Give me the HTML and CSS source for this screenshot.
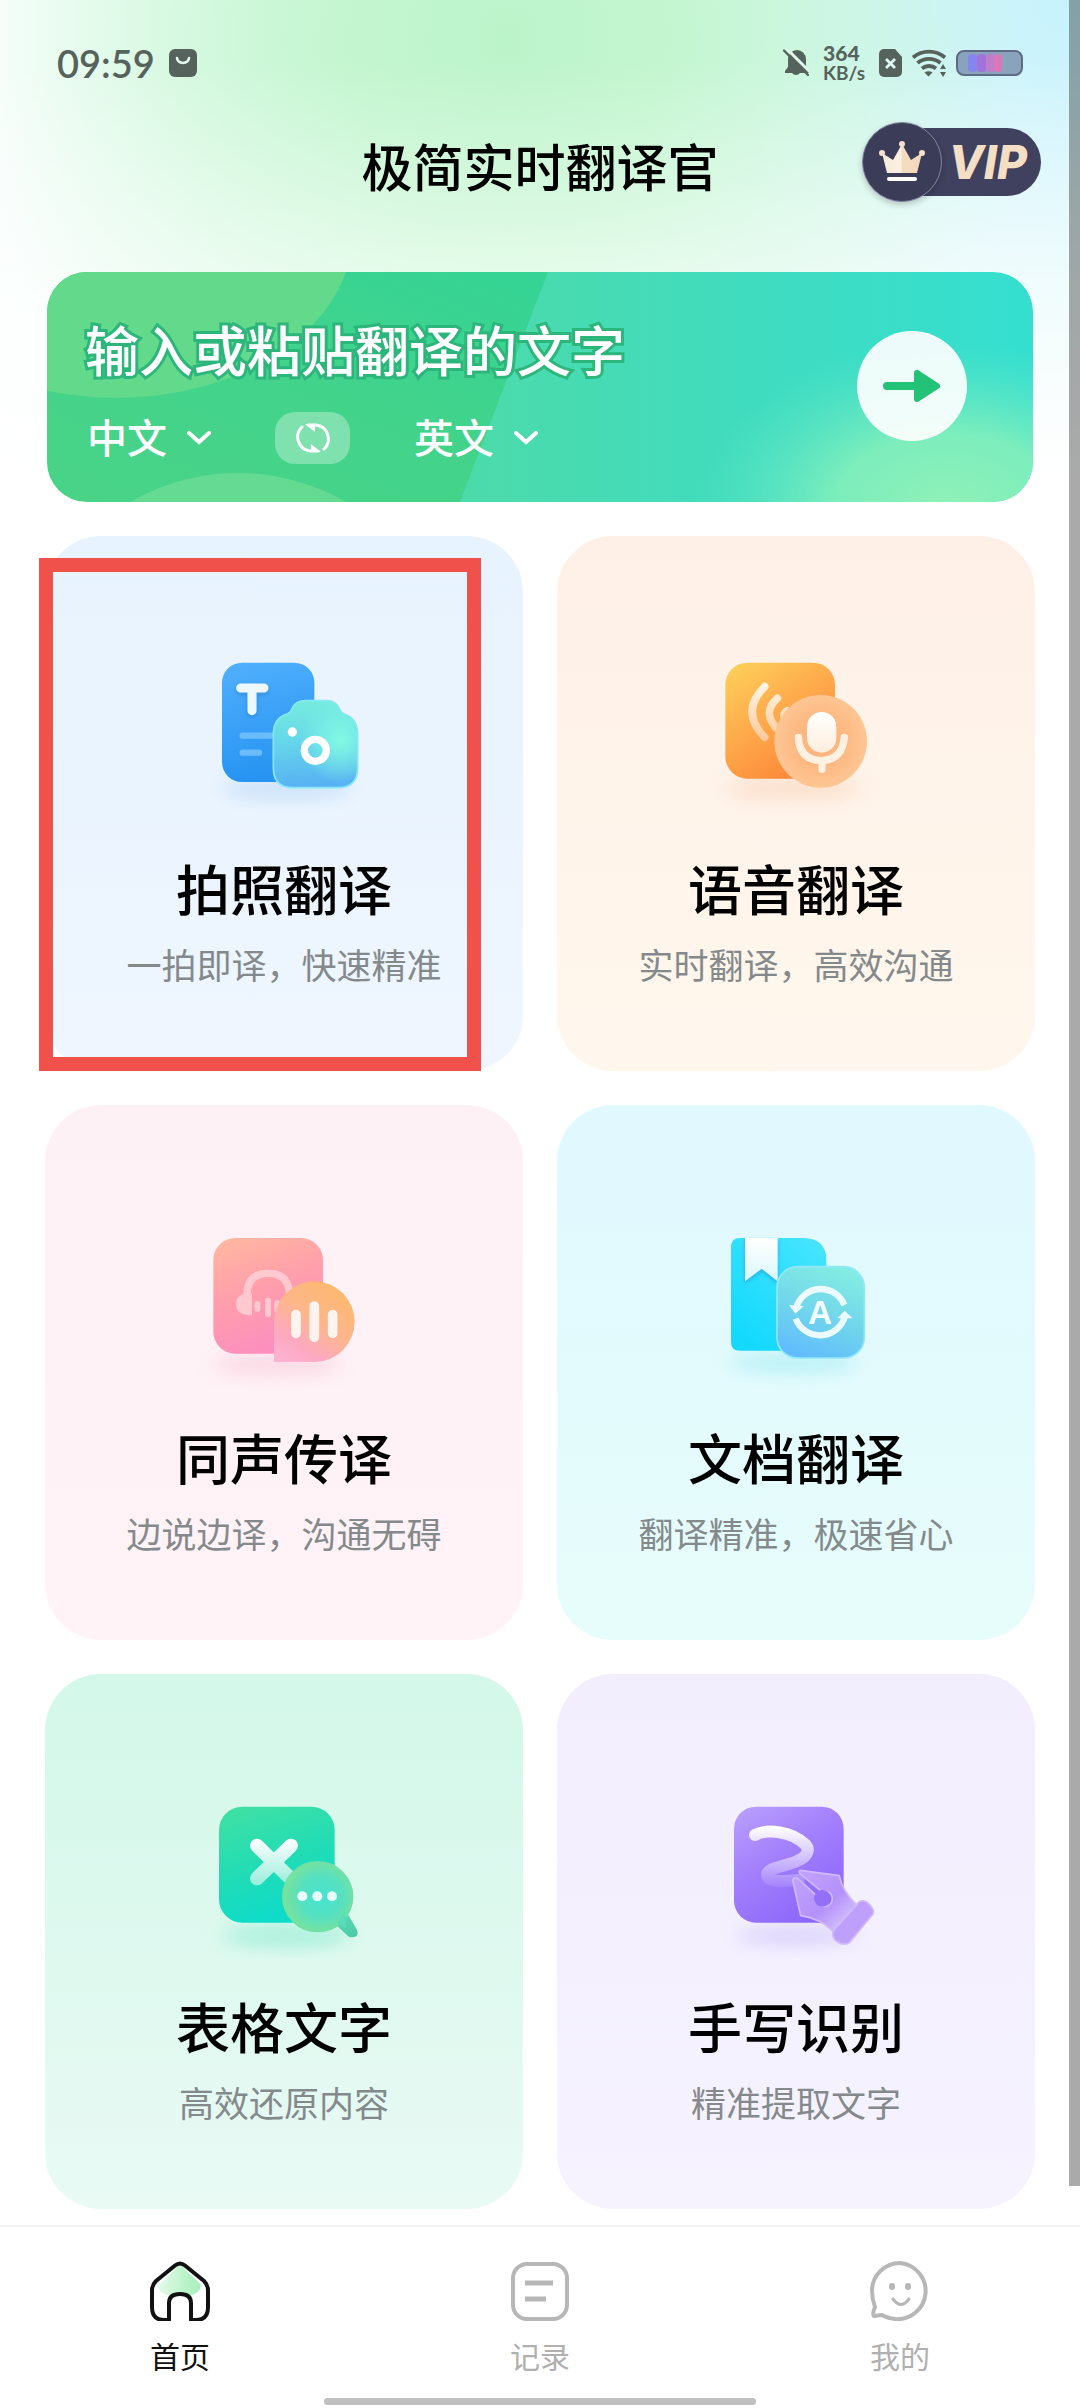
FILE: index.html
```
<!DOCTYPE html>
<html lang="zh-CN">
<head>
  <meta charset="UTF-8">
  <meta name="viewport" content="width=device-width, initial-scale=1">
  <title>极简实时翻译官</title>
  <link rel="stylesheet" href="styles.css">
</head>
<body>
  <header>
    <div class="status-bar">
      <span class="clock">09:59</span>
      <svg class="app-badge" width="28" height="28" viewBox="0 0 28 28">
        <rect width="28" height="28" rx="6" fill="#56635c"/>
        <path d="M8 9a6 5 0 0 0 12 0" fill="none" stroke="#e6fbef" stroke-width="2.6" stroke-linecap="round"/>
      </svg>
      <svg class="bell" width="26" height="29" viewBox="0 0 26 29">
        <path d="M2 24v-2l3-4v-8a9 9 0 0 1 18 0v8l3 4v2h-9a5 5 0 0 1-8 0z" fill="#56635c"/>
        <path d="M3-1l25 25" stroke="#def9ec" stroke-width="3"/>
        <path d="M1 1.500l24 24.500" stroke="#56635c" stroke-width="2.400" stroke-linecap="round"/>
      </svg>
      <span class="net-speed"><b>364</b><small>KB/s</small></span>
      <svg width="23" height="28" viewBox="0 0 23 28">
        <path d="M5 0h11l7 8v15a5 5 0 0 1-5 5H5a5 5 0 0 1-5-5V5a5 5 0 0 1 5-5z" fill="#56635c"/>
        <path d="M7 10l9 9M16 10l-9 9" stroke="#def8f4" stroke-width="2.800"/>
      </svg>
      <svg class="wifi" width="34" height="28" viewBox="0 0 34 28">
        <g fill="none" stroke="#56635c" stroke-width="3.800">
          <path d="M1 8.500a25 25 0 0 1 32 0"/>
          <path d="M5.500 14a18 18 0 0 1 23 0"/>
          <path d="M10 19.500a11 11 0 0 1 14 0"/>
        </g>
        <path d="M12.500 23.500q4-2.500 8 0l-4 4z" fill="#56635c"/>
        <path d="M28 20l3-5 3 5zM28 23l3 5 3-5z" fill="#56635c"/>
      </svg>
      <svg class="battery" width="67" height="26" viewBox="0 0 67 26">
        <rect x="1" y="1" width="65" height="24" rx="7" fill="#8aa3bd" stroke="#5f6a84" stroke-width="2"/>
        <rect x="12" y="4" width="9" height="18" rx="4" fill="#8585ee"/>
        <rect x="21" y="4" width="9" height="18" rx="4" fill="#a272dc"/>
        <rect x="30" y="4" width="9" height="18" rx="4" fill="#c17ccb"/>
        <rect x="38" y="4" width="8" height="18" rx="4" fill="#dc78b8"/>
      </svg>
    </div>

    <div class="title-bar">
      <h1>极简实时翻译官</h1>
      <a class="vip" href="#vip">
        <span class="vip-crown">
          <svg width="48" height="42" viewBox="0 0 48 42">
            <defs>
              <linearGradient id="gold">
                <stop offset="0" stop-color="#f8ead9"/>
                <stop offset=".48" stop-color="#faf0e2"/>
                <stop offset=".5" stop-color="#f5dcc0"/>
                <stop offset="1" stop-color="#f3d9bc"/>
              </linearGradient>
            </defs>
            <path d="M9 32L4 12l11 7 9-16 9 16 11-7-5 20z" fill="url(#gold)"/>
            <g fill="#f6e2ca">
              <circle cx="4" cy="12" r="3"/>
              <circle cx="24" cy="3" r="3"/>
              <circle cx="44" cy="12" r="3"/>
            </g>
            <rect x="9" y="36" width="30" height="4" rx="2" fill="#fff"/>
          </svg>
        </span>
        <span class="vip-label">VIP</span>
      </a>
    </div>
  </header>

  <main>
    <section class="banner">
      <svg class="banner-art" viewBox="0 0 986 230" preserveAspectRatio="none" aria-hidden="true">
        <defs>
          <linearGradient id="banner-left" x1="0" y1="1" x2="1" y2="0">
            <stop offset="0" stop-color="#49d387"/>
            <stop offset=".5" stop-color="#42d38b"/>
            <stop offset="1" stop-color="#32d497"/>
          </linearGradient>
          <linearGradient id="banner-right">
            <stop offset="0" stop-color="#4cdaa9"/>
            <stop offset=".55" stop-color="#3fdcc1"/>
            <stop offset="1" stop-color="#34dfd0"/>
          </linearGradient>
          <radialGradient id="banner-glow">
            <stop offset="0" stop-color="#8ff1b7"/>
            <stop offset=".45" stop-color="#84efbb" stop-opacity=".9"/>
            <stop offset="1" stop-color="#5ee6c4" stop-opacity="0"/>
          </radialGradient>
        </defs>
        <rect width="560" height="230" fill="url(#banner-left)"/>
        <ellipse cx="70" cy="-40" rx="236" ry="166" fill="#62d98b"/>
        <circle cx="191" cy="416" r="215" fill="#65da93"/>
        <path d="M501 0h485v230H413z" fill="url(#banner-right)"/>
        <ellipse cx="900" cy="235" rx="250" ry="165" fill="url(#banner-glow)"/>
      </svg>
      <div class="banner-body">
        <a class="banner-title" href="#text">输入或粘贴翻译的文字</a>
        <div class="lang-row">
          <label class="lang">
            <select aria-label="源语言">
              <option selected>中文</option>
              <option>英文</option>
            </select>
            <svg width="24" height="14" viewBox="0 0 24 14"><path d="M2 2l10 9L22 2"/></svg>
          </label>
          <button class="swap" type="button" aria-label="交换语言">
            <svg width="38" height="32" viewBox="0 0 38 32">
              <g fill="none" stroke="#fff" stroke-width="3" stroke-linecap="round">
                <path d="M8 5a14 14 0 0 0 8 24h8"/>
                <path d="M30 27a14 14 0 0 0-8-24h-8"/>
              </g>
              <path d="M11 2h10v8zM27 30H17v-8z" fill="#fff"/>
            </svg>
          </button>
          <label class="lang">
            <select aria-label="目标语言">
              <option>中文</option>
              <option selected>英文</option>
            </select>
            <svg width="24" height="14" viewBox="0 0 24 14"><path d="M2 2l10 9L22 2"/></svg>
          </label>
        </div>
      </div>
      <button class="go" type="button" aria-label="开始翻译">
        <svg width="58" height="34" viewBox="0 0 58 34">
          <path d="M4 17h30" stroke="#22c277" stroke-width="8" stroke-linecap="round"/>
          <path d="M34 4v26l20-13z" fill="#22c277" stroke="#22c277" stroke-width="6" stroke-linejoin="round"/>
        </svg>
      </button>
    </section>

    <section class="cards">
      <a class="card photo" href="#photo">
        <svg class="card-icon" viewBox="-18 0 660 570">
          <defs>
            <linearGradient id="p1" x2=".2" y2="1"><stop stop-color="#51b0fd"/><stop offset="1" stop-color="#2794f2"/></linearGradient>
            <linearGradient id="p2" x2=".1" y2="1"><stop stop-color="#77eedc"/><stop offset=".5" stop-color="#65d5eb"/><stop offset="1" stop-color="#58b2f3"/></linearGradient>
            <radialGradient id="p3" cx=".8" cy=".45" r=".5"><stop stop-color="#82fae2"/><stop offset="1" stop-color="#82fae2" stop-opacity="0"/></radialGradient>
            <filter id="soft" x="-30%" y="-150%" width="160%" height="400%"><feGaussianBlur stdDeviation="26"/></filter>
            <filter id="drop" x="-30%" y="-30%" width="160%" height="170%"><feDropShadow dx="0" dy="6" stdDeviation="6" flood-color="#1667b5" flood-opacity=".4"/></filter>
          </defs>
          <ellipse cx="320" cy="476" rx="200" ry="38" fill="#b4d4f5" opacity=".5" filter="url(#soft)"/>
          <rect x="126" y="98" width="277" height="358" rx="60" fill="url(#p1)"/>
          <path d="M182 174h70M216 174v68" fill="none" stroke="#ecf7fe" stroke-width="27" stroke-linecap="round" filter="url(#drop)"/>
          <path d="M188 317h110M188 368h49" stroke="#6cbbfb" stroke-width="19" stroke-linecap="round"/>
          <path d="M378 212h62q30 0 40 28 3 10 15 13 38 14 38 60v100q0 60-60 60H340q-60 0-60-60V313q0-46 38-60 14-4 17-15 10-26 43-26z" fill="url(#p2)"/>
          <path d="M378 212h62q30 0 40 28 3 10 15 13 38 14 38 60v100q0 60-60 60H340q-60 0-60-60V313q0-46 38-60 14-4 17-15 10-26 43-26z" fill="url(#p3)" stroke="#86e8f4" stroke-width="5"/>
          <circle cx="337" cy="306" r="14" fill="#fff"/>
          <circle cx="406" cy="361" r="33" fill="none" stroke="#fff" stroke-width="22"/>
        </svg>
        <h2>拍照翻译</h2>
        <p>一拍即译，快速精准</p>
      </a>

      <a class="card voice" href="#voice">
        <svg class="card-icon" viewBox="-12 0 660 570">
          <defs>
            <linearGradient id="v1" x2=".65" y2="1"><stop stop-color="#fed25a"/><stop offset=".5" stop-color="#feab4c"/><stop offset="1" stop-color="#fd8638"/></linearGradient>
            <radialGradient id="v2" cx=".5" cy=".5" r=".52"><stop stop-color="#fdb27a"/><stop offset=".5" stop-color="#fdb882"/><stop offset="1" stop-color="#fdc795"/></radialGradient>
            <linearGradient id="v3" x2="0" y2="1"><stop stop-color="#fff"/><stop offset="1" stop-color="#ffeedd"/></linearGradient>
            <linearGradient id="v4" gradientUnits="userSpaceOnUse" x1="0" y1="160" x2="0" y2="335"><stop stop-color="#fff6e4"/><stop offset="1" stop-color="#ffc899"/></linearGradient>
          </defs>
          <ellipse cx="310" cy="476" rx="205" ry="36" fill="#f8cfb2" opacity=".5" filter="url(#soft)"/>
          <rect x="106" y="98" width="329" height="348" rx="66" fill="url(#v1)"/>
          <g fill="none" stroke="url(#v4)" stroke-width="23" stroke-linecap="round">
            <path d="M224 170q-75 75 0 152"/>
            <path d="M262 205q-48 42 0 92"/>
            <path d="M292 242q-18 12-5 24"/>
          </g>
          <circle cx="392" cy="334" r="139" fill="url(#v2)"/>
          <rect x="351" y="246" width="88" height="122" rx="44" fill="url(#v3)"/>
          <path d="M325 322q4 68 68 70 64-2 70-70M396 394v24" fill="none" stroke="#fff1e2" stroke-width="22" stroke-linecap="round"/>
        </svg>
        <h2>语音翻译</h2>
        <p>实时翻译，高效沟通</p>
      </a>

      <a class="card interpret" href="#interpret">
        <svg class="card-icon" viewBox="-18 -33 660 570">
          <defs>
            <linearGradient id="i1" x2=".35" y2="1"><stop stop-color="#ffb9a0"/><stop offset=".5" stop-color="#ff9fab"/><stop offset="1" stop-color="#fc8fbe"/></linearGradient>
            <linearGradient id="i2" x1=".8" y1="0" x2=".15" y2="1"><stop stop-color="#fdb96c"/><stop offset=".45" stop-color="#fdb68a"/><stop offset=".8" stop-color="#fda9c4"/><stop offset="1" stop-color="#fdb2d0"/></linearGradient>
          </defs>
          <ellipse cx="290" cy="464" rx="195" ry="34" fill="#f8c2d4" opacity=".5" filter="url(#soft)"/>
          <rect x="100" y="84" width="329" height="347" rx="66" fill="url(#i1)"/>
          <g stroke="#ffc9cf" fill="none" stroke-linecap="round">
            <path d="M201 252q2-62 64-62 60 0 64 62" stroke-width="22"/>
            <path d="M232 282v14M264 272v40M292 280v20" stroke-width="18"/>
          </g>
          <path d="M216 250v66q-48 0-48-34t48-32z" fill="#ffc9cf"/>
          <path d="M282 456V335a121 121 0 1 1 121 121z" fill="url(#i2)"/>
          <path d="M348 314v56M403 288v94M458 314v56" stroke="#fff3ef" stroke-width="29" stroke-linecap="round"/>
        </svg>
        <h2>同声传译</h2>
        <p>边说边译，沟通无碍</p>
      </a>

      <a class="card document" href="#document">
        <svg class="card-icon" viewBox="-12 -33 660 570">
          <defs>
            <linearGradient id="d1" x1="1" y1="0" x2=".3" y2="1"><stop stop-color="#49e5fd"/><stop offset="1" stop-color="#14d9fd"/></linearGradient>
            <linearGradient id="d2" x1=".7" y1="0" x2=".35" y2="1"><stop stop-color="#83ede2"/><stop offset=".55" stop-color="#70d5ec"/><stop offset="1" stop-color="#62bcfc"/></linearGradient>
            <linearGradient id="d3" x2="0" y2="1"><stop stop-color="#fff"/><stop offset="1" stop-color="#d9f7fd"/></linearGradient>
          </defs>
          <ellipse cx="310" cy="458" rx="195" ry="34" fill="#a3ecf2" opacity=".6" filter="url(#soft)"/>
          <path d="M150 84h195q64 4 64 66v272H150q-27 0-27-27V111q0-27 27-27z" fill="url(#d1)"/>
          <path d="M165 84h98v130l-48-38-50 38z" fill="url(#d3)" filter="url(#drop)"/>
          <rect x="261" y="170" width="262" height="274" rx="62" fill="url(#d2)" stroke="#8fe9fb" stroke-width="5"/>
          <g fill="none" stroke="#ecfbff" stroke-width="19">
            <path d="M463 285a76 76 0 0 0-144 8"/>
            <path d="M317 326a78 78 0 0 0 147-4"/>
          </g>
          <path d="M297 285l44 4-25 22zM442 325l22-23 24 23z" fill="#ecfbff"/>
          <text class="icon-a" x="390" y="341">A</text>
        </svg>
        <h2>文档翻译</h2>
        <p>翻译精准，极速省心</p>
      </a>

      <a class="card sheet" href="#sheet">
        <svg class="card-icon" viewBox="-18 -36 660 570">
          <defs>
            <linearGradient id="s1" x2=".35" y2="1"><stop stop-color="#42e1a2"/><stop offset=".6" stop-color="#20dcb6"/><stop offset="1" stop-color="#0edcc9"/></linearGradient>
            <radialGradient id="s2" cx=".55" cy=".5" r=".6"><stop stop-color="#44e4d1"/><stop offset=".5" stop-color="#56e0c0"/><stop offset="1" stop-color="#83e391"/></radialGradient>
            <linearGradient id="s3" gradientUnits="userSpaceOnUse" x1="0" y1="176" x2="0" y2="316"><stop stop-color="#fff"/><stop offset="1" stop-color="#97eedb"/></linearGradient>
            <linearGradient id="s4" gradientUnits="userSpaceOnUse" x1="470" y1="400" x2="525" y2="470"><stop stop-color="#5adcbb"/><stop offset="1" stop-color="#4cc9a2"/></linearGradient>
          </defs>
          <ellipse cx="320" cy="468" rx="195" ry="36" fill="#8cebd0" opacity=".6" filter="url(#soft)"/>
          <rect x="117" y="80" width="347" height="348" rx="70" fill="url(#s1)"/>
          <path d="M231 197l102 100M333 197l-102 98" fill="none" stroke="url(#s3)" stroke-width="42" stroke-linecap="round"/>
          <path d="M494 386l36 62q10 24-14 24-10 0-16-8l-44-40z" fill="url(#s4)"/>
          <circle cx="413" cy="350" r="105" fill="url(#s2)" stroke="#6fe0a8" stroke-width="4"/>
          <path d="M470 430l28 14-2-52z" fill="#5adcbb"/>
          <g fill="#e8fffc">
            <circle cx="367" cy="349" r="15"/>
            <circle cx="412" cy="349" r="15"/>
            <circle cx="456" cy="349" r="15"/>
          </g>
        </svg>
        <h2>表格文字</h2>
        <p>高效还原内容</p>
      </a>

      <a class="card handwrite" href="#handwrite">
        <svg class="card-icon" viewBox="-12 -36 660 570">
          <defs>
            <linearGradient id="h1" x2=".6" y2="1"><stop stop-color="#bba0fd"/><stop offset=".5" stop-color="#a27ffc"/><stop offset="1" stop-color="#8d68fb"/></linearGradient>
            <linearGradient id="h2" gradientUnits="userSpaceOnUse" x1="0" y1="140" x2="0" y2="320"><stop stop-color="#fff"/><stop offset=".5" stop-color="#d4c4fd"/><stop offset="1" stop-color="#a583fb"/></linearGradient>
            <linearGradient id="h3" x2="1" y2="1"><stop stop-color="#c3a5fc"/><stop offset=".55" stop-color="#b491fb"/><stop offset="1" stop-color="#e2d5fe"/></linearGradient>
          </defs>
          <ellipse cx="320" cy="468" rx="185" ry="32" fill="#cbbcfa" opacity=".5" filter="url(#soft)"/>
          <rect x="132" y="80" width="329" height="348" rx="66" fill="url(#h1)"/>
          <path d="M195 165c35-20 112-10 150 28 18 18 5 40-30 53-40 15-85 18-84 40 1 22 50 18 95 14" fill="none" stroke="url(#h2)" stroke-width="36" stroke-linecap="round" stroke-linejoin="round"/>
          <g stroke="#d0bafd" stroke-width="5" stroke-linejoin="round">
            <path d="M331 271l117 16q8 45 52 88l-72 78q-38-38-96-46l-24-106q4-10 14-7l60 55a23 23 0 1 0 13-14l-65-54q-5-8 1-10z" fill="url(#h3)"/>
            <path d="M508 365q16-8 32 10 14 16 9 27l-72 87q-16 8-36-4-18-14-11-33z" fill="#bea0fb"/>
          </g>
          <circle cx="397" cy="355" r="25" fill="#9470f8"/>
        </svg>
        <h2>手写识别</h2>
        <p>精准提取文字</p>
      </a>
      <div class="highlight"></div>
    </section>
  </main>

  <nav>
    <ul class="tabs">
      <li>
        <a class="active" href="#home">
          <svg width="60" height="60" viewBox="0 0 60 60">
            <defs><linearGradient id="home-fill"><stop stop-color="#e2fbe9"/><stop offset="1" stop-color="#a5eeb9"/></linearGradient></defs>
            <path d="M30 3L8 25q2 9 14 10h16q12-2 13-11z" fill="url(#home-fill)"/>
            <path d="M25 4.500q5-4 10 0L54 20q4 4 4 9v17q0 13-12 13h-5V42q0-9-11-9t-11 9v17h-5Q2 59 2 46V29q0-5 4-9z" fill="none" stroke="#111" stroke-width="4" stroke-linejoin="round"/>
          </svg>
          首页
        </a>
      </li>
      <li>
        <a href="#records">
          <svg width="60" height="60" viewBox="0 0 60 60" fill="none" stroke="#b7b7b7" stroke-width="4">
            <rect x="3" y="3" width="54" height="55" rx="14"/>
            <path d="M15 22h28M15 38h21" stroke-width="5"/>
          </svg>
          记录
        </a>
      </li>
      <li>
        <a href="#mine">
          <svg width="60" height="60" viewBox="0 0 60 60" fill="none" stroke="#b7b7b7" stroke-width="4">
            <path d="M30 2a28 28 0 1 1-5 56q-8-1-13-4l-8 1q-2-2 1-9Q2 38 2 30A28 28 0 0 1 30 2z" stroke-linejoin="round"/>
            <path d="M23 38q8 11 16 0" stroke-width="3" stroke-linecap="round"/>
            <path d="M22 25v1M38 25v1" stroke-width="6" stroke-linecap="round"/>
          </svg>
          我的
        </a>
      </li>
    </ul>
    <div class="home-indicator"></div>
  </nav>
  <div class="scroll-thumb"></div>
</body>
</html>
```

FILE: styles.css
```
* {
  box-sizing: border-box;
}
body {
  position: relative;
  display: flex;
  flex-direction: column;
  min-height: 100vh;
  margin: 0;
  font-family: "Noto Sans CJK SC", sans-serif;
  color: #000;
  background:
    linear-gradient(to bottom, #fff0 60px, #fff 480px),
    radial-gradient(ellipse 48% 600px at 47% 40px, #bcf4ca, #c3f6cf 30%, #c8f7d800 100%),
    radial-gradient(ellipse 60% 520px at 100% 0, #c6f2fc, #dff8fb 55%, #fff0),
    linear-gradient(to right, #f7fefb, #e6fbf0 25%, #e6fbf4) #fff;
}
a {
  color: inherit;
  text-decoration: none;
}
button, select {
  border: 0;
  padding: 0;
  font: inherit;
  color: inherit;
}
h1, h2, p, ul {
  margin: 0;
  padding: 0;
}

/* status bar */
.status-bar {
  display: flex;
  align-items: center;
  height: 80px;
  padding: 46px 57px 0;
  font-family: Lato, sans-serif;
  color: #56635c;
}
.clock {
  font-size: 38px;
  font-weight: 600;
}
.app-badge {
  margin-left: 14px;
}
.bell {
  margin-left: auto;
}
.net-speed {
  display: flex;
  flex-direction: column;
  margin: 0 14px;
  font-size: 21px;
  font-weight: 700;
  line-height: 20px;
}
.net-speed small {
  font-size: 19px;
}
.wifi {
  margin: 0 10px;
}

/* title */
.title-bar {
  display: grid;
  grid-template-columns: 1fr auto 1fr;
  align-items: end;
  padding: 42px 39px 0;
}
h1 {
  grid-column: 2;
  font-size: 51px;
  font-weight: 500;
  line-height: 74px;
}
.vip {
  display: flex;
  align-items: center;
  justify-self: end;
}
.vip-crown {
  position: relative;
  display: grid;
  place-items: center;
  width: 80px;
  height: 80px;
  border: 1px solid #8486a0;
  border-radius: 50%;
  background: #3b3c58;
  box-shadow: 0 3px 6px #0003;
}
.vip-label {
  height: 68px;
  margin-left: -40px;
  padding: 0 14px 0 46px;
  border-radius: 0 34px 34px 0;
  background: #40415f;
  color: #f4dfc5;
  font: italic 800 46px/68px Inter, sans-serif;
}

/* banner */
main {
  flex: 1;
  padding: 70px 45px 16px;
}
.banner {
  position: relative;
  display: flex;
  align-items: center;
  justify-content: space-between;
  margin: 0 2px 34px;
  padding: 36px 66px 38px 38px;
  border-radius: 40px;
  overflow: hidden;
  color: #fff;
}
.banner-art {
  position: absolute;
  inset: 0;
  width: 100%;
  height: 100%;
}
.banner-body {
  position: relative;
}
.banner-title {
  display: block;
  margin-bottom: 22px;
  font-size: 54px;
  font-weight: 500;
  line-height: 82px;
  -webkit-text-stroke: 6px #2db67c;
  paint-order: stroke fill;
}
.lang-row {
  display: flex;
  align-items: center;
  gap: 64px;
  padding-left: 2px;
}
.lang {
  display: flex;
  align-items: center;
  gap: 20px;
}
.lang select {
  appearance: none;
  height: 52px;
  padding-bottom: 4px;
  background: none;
  font-size: 40px;
  font-weight: 500;
  line-height: 48px;
}
.lang path {
  fill: none;
  stroke: #fff;
  stroke-width: 4;
  stroke-linecap: round;
}
.swap {
  display: grid;
  place-items: center;
  width: 75px;
  height: 52px;
  border-radius: 20px;
  background: #ffffff50;
}
.go {
  position: relative;
  display: grid;
  place-items: center;
  width: 110px;
  height: 110px;
  border-radius: 50%;
  background: #ffffffe8;
}

/* cards */
.cards {
  position: relative;
  display: grid;
  grid-template-columns: 1fr 1fr;
  gap: 34px;
}
.card {
  display: flex;
  flex-direction: column;
  align-items: center;
  padding: 94px 0 82px;
  border-radius: 56px;
}
.card-icon {
  width: 220px;
  height: 190px;
}
.card h2 {
  margin: 38px 0 21px;
  font-size: 54px;
  font-weight: 500;
  line-height: 60px;
}
.card p {
  font-size: 35px;
  line-height: 50px;
  color: #848a8c;
}
.photo { background: linear-gradient(#e7f3fe, #eff6ff); }
.voice { background: linear-gradient(#fef0e7, #fff7ed); }
.interpret { background: linear-gradient(#fdf1f5, #fff3f7); }
.document { background: linear-gradient(#e0f8ff, #e7fdfb); }
.sheet { background: linear-gradient(#d3f8ea, #e9faf4); }
.handwrite { background: linear-gradient(#f2eefe, #f6f3ff); }
.icon-a {
  font: 700 100px "Liberation Sans", sans-serif;
  text-anchor: middle;
  fill: #f2fdff;
}
.highlight {
  position: absolute;
  top: 22px;
  left: -6px;
  width: 442px;
  height: 513px;
  border: 14px solid #f0524b;
  pointer-events: none;
}

/* bottom tabs */
nav {
  padding: 34px 0 3px;
  border-top: 2px solid #f2f2f2;
  background: #fff;
}
.tabs {
  display: grid;
  grid-template-columns: repeat(3, 1fr);
  list-style: none;
}
.tabs a {
  display: flex;
  flex-direction: column;
  align-items: center;
  gap: 14px;
  font-size: 30px;
  line-height: 40px;
  color: #b0b0b0;
}
.tabs .active {
  color: #111;
}
.home-indicator {
  width: 40%;
  height: 7px;
  margin: 23px auto 0;
  border-radius: 4px;
  background: #c0c0c0;
}
.scroll-thumb {
  position: absolute;
  top: 0;
  right: 0;
  width: 11px;
  height: 2186px;
  background: #00000055;
}
```
